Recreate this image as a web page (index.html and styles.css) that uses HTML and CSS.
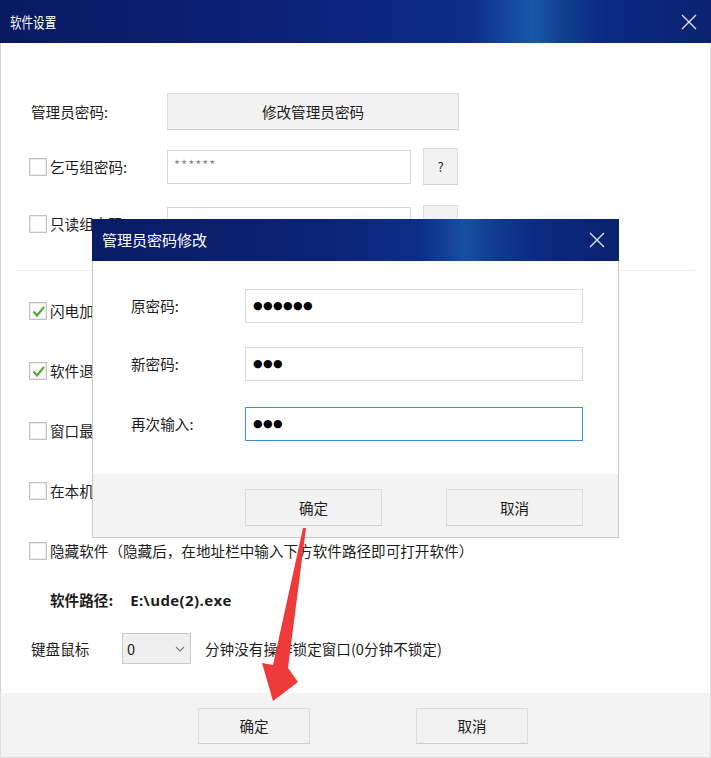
FILE: index.html
```html
<!DOCTYPE html>
<html lang="zh-CN">
<head>
    <meta charset="UTF-8">
    <title>软件设置</title>
    <link rel="stylesheet" href="styles.css">
</head>
<body>
    <div class="window">
        <div class="titlebar">
            <span class="title-text squeezed">软件设置</span>
            <svg class="close" width="16" height="16" viewBox="0 0 16 16"><path d="M1 1L15 15M15 1L1 15"/></svg>
        </div>

        <div class="content">
            <div class="row row-admin">
                <span class="lead">管理员密码:</span>
                <div class="btn btn-wide">修改管理员密码</div>
            </div>

            <div class="row row-pass">
                <label class="lead check"><span class="box"></span>乞丐组密码:</label>
                <div class="field placeholder">******</div>
                <div class="btn btn-help">?</div>
            </div>

            <div class="row row-pass">
                <label class="lead check"><span class="box"></span>只读组密码:</label>
                <div class="field"></div>
                <div class="btn btn-help">?</div>
            </div>

            <div class="divider"></div>

            <div class="options">
                <label class="check option"><span class="box checked"><svg width="15" height="15" viewBox="0 0 15 15"><path d="M2.5 7.5L6 11.5L13 3"/></svg></span>闪电加锁</label>
                <label class="check option"><span class="box checked"><svg width="15" height="15" viewBox="0 0 15 15"><path d="M2.5 7.5L6 11.5L13 3"/></svg></span>软件退出</label>
                <label class="check option"><span class="box"></span>窗口最小</label>
                <label class="check option"><span class="box"></span>在本机启</label>
                <label class="check option"><span class="box"></span>隐藏软件（隐藏后，在地址栏中输入下方软件路径即可打开软件）</label>
            </div>

            <div class="row path-row">
                <span class="path-label">软件路径:</span>
                <span class="path-value">E:\ude(2).exe</span>
            </div>

            <div class="row lock-row">
                <span class="lock-label">键盘鼠标</span>
                <div class="select">
                    <span>0</span>
                    <svg width="10" height="6" viewBox="0 0 10 6"><path d="M1 1L5 5L9 1"/></svg>
                </div>
                <span class="lock-text">分钟没有操作锁定窗口(0分钟不锁定)</span>
            </div>
        </div>

        <div class="footer">
            <div class="btn btn-foot">确定</div>
            <div class="btn btn-foot">取消</div>
        </div>
    </div>

    <!-- change-password popup -->
    <div class="dialog">
        <div class="titlebar dialog-bar">
            <span class="title-text">管理员密码修改</span>
            <svg class="close" width="16" height="16" viewBox="0 0 16 16"><path d="M1 1L15 15M15 1L1 15"/></svg>
        </div>
        <div class="dialog-body">
            <div class="pw-row">
                <span class="pw-label">原密码:</span>
                <div class="field pw-field dots">●●●●●●</div>
            </div>
            <div class="pw-row">
                <span class="pw-label">新密码:</span>
                <div class="field pw-field dots">●●●</div>
            </div>
            <div class="pw-row">
                <span class="pw-label">再次输入:</span>
                <div class="field pw-field dots focused">●●●</div>
            </div>
        </div>
        <div class="dialog-foot">
            <div class="btn btn-dlg">确定</div>
            <div class="btn btn-dlg">取消</div>
        </div>
    </div>

    <!-- red pointer arrow -->
    <svg class="pointer" width="711" height="758" viewBox="0 0 711 758">
        <polygon points="303,528 306,528 288,668 298,682 273,701 262,663 273,665"/>
    </svg>
</body>
</html>
```

FILE: styles.css
```css
body {
    margin: 0;
    font-family: "Noto Sans CJK SC", "Noto Sans", sans-serif;
    font-size: 14.6px;
    line-height: 20px;
    color: #1c1c1c;
    background: #fff;
}
.window {
    width: 711px;
    height: 758px;
    display: flex;
    flex-direction: column;
}
.titlebar {
    height: 43px;
    flex-shrink: 0;
    display: flex;
    align-items: center;
    justify-content: space-between;
    padding: 0 14px 0 10px;
    color: #fff;
    background: linear-gradient(90deg, #091a62 0%, #0b2278 40%, #0d2c88 66%, #1858aa 75%, #11408f 79%, #0b2a84 85%, #0a2270 100%);
}
.title-text {
    font-size: 15px;
}
.squeezed {
    display: inline-block;
    transform: scaleX(0.77);
    transform-origin: left center;
}
.close path {
    stroke: #e4e8f4;
    stroke-width: 1.3;
    fill: none;
}

.content {
    height: 650px;
    box-sizing: border-box;
    border-left: 1px solid #d2d2d2;
    border-right: 1px solid #e2e2e2;
    padding: 50px 0 0 28px;
}
.row {
    display: flex;
    align-items: center;
}
.lead {
    width: 138px;
    flex-shrink: 0;
}
.row-admin {
    height: 37px;
}
.row-admin .lead {
    padding-left: 2px;
    width: 136px;
}
.row-pass {
    height: 37px;
    margin-top: 18px;
}
.row-pass + .row-pass {
    margin-top: 20px;
}

.btn {
    box-sizing: border-box;
    display: flex;
    align-items: center;
    justify-content: center;
    background: #f2f2f2;
    border: 1px solid #dcdcdc;
    border-bottom-color: #cfcfcf;
}
.btn-wide {
    width: 292px;
    height: 37px;
}
.btn-help {
    width: 35px;
    height: 37px;
    margin-left: 12px;
    font-size: 13px;
}
.field {
    box-sizing: border-box;
    width: 244px;
    height: 34px;
    border: 1px solid #d9d9d9;
    background: #fff;
}
.placeholder {
    color: #8a8a8a;
    font-size: 13px;
    letter-spacing: 1px;
    padding: 4px 0 0 6px;
}

.check {
    display: flex;
    align-items: center;
}
.box {
    box-sizing: border-box;
    width: 18px;
    height: 18px;
    margin-right: 3px;
    border: 1px solid #c3c3c3;
    box-shadow: inset 0 0 0 1px #ececec;
    background: #fff;
    display: flex;
    align-items: center;
    justify-content: center;
}
.box.checked path {
    stroke: #5aa83a;
    stroke-width: 2.2;
    fill: none;
}

.divider {
    height: 1px;
    width: 680px;
    margin: 28px 0 0 -14px;
    background: #efefef;
}
.options {
    display: flex;
    flex-direction: column;
    gap: 30px;
    margin-top: 25px;
}
.option {
    height: 30px;
}

.path-row {
    height: 30px;
    margin-top: 19px;
    padding-left: 21px;
    font-weight: bold;
}
.path-value {
    margin-left: 17px;
    font-family: "Open Sans", "Noto Sans", sans-serif;
    font-size: 15px;
    letter-spacing: 0.4px;
}
.lock-row {
    height: 31px;
    margin-top: 18px;
    padding-left: 2px;
}
.lock-label {
    width: 91px;
}
.select {
    box-sizing: border-box;
    width: 69px;
    height: 31px;
    border: 1px solid #cacaca;
    background: #efefef;
    display: flex;
    align-items: center;
    justify-content: space-between;
    padding: 0 5px 0 4px;
}
.select path {
    stroke: #777;
    stroke-width: 1.1;
    fill: none;
}
.lock-text {
    margin-left: 14px;
}

.footer {
    flex: 1;
    box-sizing: border-box;
    background: #f3f3f3;
    border: 1px solid #dedede;
    border-top: none;
    display: flex;
    gap: 106px;
    padding: 15px 0 0 197px;
}
.btn-foot {
    width: 112px;
    height: 36px;
}

/* popup */
.dialog {
    position: absolute;
    left: 92px;
    top: 219px;
    width: 527px;
    height: 319px;
    box-sizing: border-box;
    border: 1px solid #cbcbcb;
    background: #fff;
    display: flex;
    flex-direction: column;
}
.dialog-bar {
    height: 42px;
    margin: -1px -1px 0;
    padding: 0 14px 0 10px;
    background: linear-gradient(90deg, #0a1c66 0%, #0b2476 45%, #0d2e88 62%, #1650a2 71%, #103e8e 76%, #0b2a82 84%, #0a226f 100%);
}
.dialog-body {
    height: 213px;
    box-sizing: border-box;
    padding: 28px 0 0 38px;
    display: flex;
    flex-direction: column;
    gap: 24px;
}
.pw-row {
    display: flex;
    align-items: center;
}
.pw-row + .pw-row + .pw-row {
    margin-top: 2px;
}
.pw-label {
    width: 114px;
}
.pw-field {
    width: 338px;
}
.dots {
    font-family: "DejaVu Sans", sans-serif;
    font-size: 11px;
    line-height: 32px;
    letter-spacing: 0.4px;
    padding-left: 7px;
    color: #000;
}
.focused {
    border-color: #3e8ed8;
}
.dialog-foot {
    flex: 1;
    background: #f3f3f3;
    display: flex;
    gap: 64px;
    padding: 15px 0 0 152px;
}
.btn-dlg {
    width: 137px;
    height: 37px;
}

.pointer {
    position: absolute;
    left: 0;
    top: 0;
}
.pointer polygon {
    fill: #ef3a3c;
}
```
